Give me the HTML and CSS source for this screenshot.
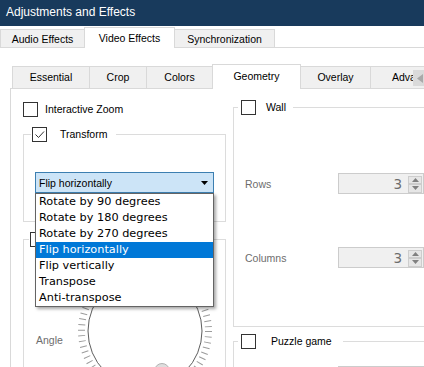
FILE: index.html
```html
<!DOCTYPE html>
<html lang="en">
<head>
    <meta charset="UTF-8">
    <meta name="viewport" content="width=device-width, initial-scale=1.0">
    <title>Adjustments and Effects</title>
    <link rel="stylesheet" href="styles.css">
</head>
<body>
    <div class="titlebar">Adjustments and Effects</div>

    <div class="main-tabs">
        <div class="main-tab tab-audio">Audio Effects</div>
        <div class="main-tab tab-video active">Video Effects</div>
        <div class="main-tab tab-sync">Synchronization</div>
    </div>

    <div class="page">
        <div class="sub-tabs">
            <div class="sub-tab tab-essential">Essential</div>
            <div class="sub-tab tab-crop">Crop</div>
            <div class="sub-tab tab-colors">Colors</div>
            <div class="sub-tab tab-geometry active">Geometry</div>
            <div class="sub-tab tab-overlay">Overlay</div>
            <div class="sub-tab tab-advanced">Adva</div>
            <div class="tab-scroll">
                <svg width="6" height="9" viewBox="0 0 6 9"><polygon points="6,0 6,9 0,4.5" fill="#a9a9a9"/></svg>
            </div>
        </div>

        <div class="pane">
            <!-- left column -->
            <div class="col col-left">
                <div class="check-row zoom-row">
                    <span class="box"></span>
                    <span class="check-label">Interactive Zoom</span>
                </div>

                <fieldset class="group group-transform">
                    <legend class="legend">
                        <span class="box">
                            <svg width="13" height="13" viewBox="0 0 13 13"><polyline points="2.5,6.5 5.5,9.5 11,3.5" fill="none" stroke="#333" stroke-width="1"/></svg>
                        </span>
                        <span class="check-label">Transform</span>
                    </legend>
                    <div class="group-body">
                        <div class="combo">
                            <span class="combo-text">Flip horizontally</span>
                            <svg class="combo-arrow" width="7" height="4" viewBox="0 0 7 4"><polygon points="0,0 7,0 3.5,4" fill="#000"/></svg>
                            <ul class="combo-list">
                                <li>Rotate by 90 degrees</li>
                                <li>Rotate by 180 degrees</li>
                                <li>Rotate by 270 degrees</li>
                                <li class="selected">Flip horizontally</li>
                                <li>Flip vertically</li>
                                <li>Transpose</li>
                                <li>Anti-transpose</li>
                            </ul>
                        </div>
                    </div>
                </fieldset>

                <fieldset class="group group-rotate">
                    <legend class="legend">
                        <span class="box"></span>
                    </legend>
                    <div class="group-body rotate-body">
                        <span class="dim-label angle-label">Angle</span>
                        <svg class="dial" width="150" height="150" viewBox="0 0 150 150">
                            <circle cx="75" cy="75" r="63.5" fill="none" stroke="#9c9c9c" stroke-width="7" stroke-dasharray="1 4.541"/>
                            <circle cx="75" cy="75" r="57" fill="none" stroke="#5e5e5e" stroke-width="1"/>
                            <circle cx="92" cy="115" r="7.5" fill="#dedede" stroke="#b3b3b3" stroke-width="1"/>
                        </svg>
                    </div>
                </fieldset>
            </div>

            <!-- right column -->
            <div class="col col-right">
                <fieldset class="group group-wall">
                    <legend class="legend">
                        <span class="box"></span>
                        <span class="check-label">Wall</span>
                    </legend>
                    <div class="group-body wall-body">
                        <div class="field-row">
                            <span class="dim-label">Rows</span>
                            <div class="spin">
                                <span class="spin-value">3</span>
                                <div class="spin-buttons">
                                    <span class="spin-btn"><svg width="7" height="4" viewBox="0 0 7 4"><polygon points="0,4 7,4 3.5,0" fill="#808080"/></svg></span>
                                    <span class="spin-btn"><svg width="7" height="4" viewBox="0 0 7 4"><polygon points="0,0 7,0 3.5,4" fill="#808080"/></svg></span>
                                </div>
                            </div>
                        </div>
                        <div class="field-row columns-row">
                            <span class="dim-label">Columns</span>
                            <div class="spin">
                                <span class="spin-value">3</span>
                                <div class="spin-buttons">
                                    <span class="spin-btn"><svg width="7" height="4" viewBox="0 0 7 4"><polygon points="0,4 7,4 3.5,0" fill="#808080"/></svg></span>
                                    <span class="spin-btn"><svg width="7" height="4" viewBox="0 0 7 4"><polygon points="0,0 7,0 3.5,4" fill="#808080"/></svg></span>
                                </div>
                            </div>
                        </div>
                    </div>
                </fieldset>

                <fieldset class="group group-puzzle">
                    <legend class="legend">
                        <span class="box"></span>
                        <span class="check-label">Puzzle game</span>
                    </legend>
                    <div class="group-body puzzle-body">
                        <div class="field-row">
                            <span></span>
                            <div class="spin"></div>
                        </div>
                    </div>
                </fieldset>
            </div>
        </div>
    </div>
</body>
</html>
```

FILE: styles.css
```css
* {
    box-sizing: border-box;
}
body {
    margin: 0;
    width: 424px;
    height: 367px;
    overflow: hidden;
    background-color: #fff;
    font-family: "Liberation Sans", Arial, sans-serif;
    font-size: 10.5px;
    color: #000;
}

/* title bar */
.titlebar {
    height: 26px;
    background-color: #183a5c;
    color: #fff;
    font-size: 12px;
    line-height: 24px;
    padding-left: 6px;
}

/* top tabs */
.main-tabs {
    display: flex;
    align-items: flex-end;
    height: 22px;
    border-bottom: 1px solid #d9d9d9;
}
.main-tab {
    height: 18px;
    margin-right: -1px;
    padding-top: 2px;
    line-height: 15px;
    text-align: center;
    background-color: #f0f0f0;
    border: 1px solid #d9d9d9;
    border-bottom: none;
}
.main-tab.active {
    height: 21px;
    margin-bottom: -1px;
    padding-top: 3px;
    background-color: #fff;
    position: relative;
    z-index: 1;
}
.tab-audio { width: 85px; }
.tab-video { width: 91px; }
.tab-sync { width: 101px; }

/* page with inner tabs */
.page {
    padding: 16px 0 0 10px;
}
.sub-tabs {
    display: flex;
    align-items: flex-end;
    height: 24px;
    padding-left: 2px;
    position: relative;
}
.sub-tab {
    flex: none;
    height: 22px;
    margin-right: -1px;
    line-height: 20px;
    text-align: center;
    background-color: #f0f0f0;
    border: 1px solid #d9d9d9;
    border-bottom: none;
    white-space: nowrap;
    overflow: hidden;
}
.sub-tab.active {
    height: 25px;
    margin-bottom: -1px;
    line-height: 23px;
    background-color: #fff;
    position: relative;
    z-index: 2;
}
.tab-essential { width: 78px; }
.tab-crop { width: 58px; }
.tab-colors { width: 67px; }
.tab-geometry { width: 89px; }
.tab-overlay { width: 71px; }
.tab-advanced { width: 70px; text-align: left; padding-left: 21px; }

.tab-scroll {
    position: absolute;
    left: 403px;
    top: 6px;
    width: 17px;
    height: 16px;
    background-color: #dadada;
    z-index: 3;
    display: flex;
    align-items: center;
    padding-left: 4px;
}

/* pane */
.pane {
    display: flex;
    gap: 7px;
    padding: 11px 0 0 12px;
    border-top: 1px solid #d9d9d9;
    border-left: 1px solid #d9d9d9;
    height: 300px;
}
.col {
    flex: none;
}
.col-left {
    width: 203px;
    margin-top: 2px;
}
.col-right {
    width: 200px;
}

.check-row {
    display: flex;
    align-items: center;
    gap: 7px;
    height: 15px;
}
.box {
    flex: none;
    width: 15px;
    height: 15px;
    border: 1px solid #333;
    background-color: #fff;
    display: flex;
}
.check-label {
    line-height: 15px;
    white-space: nowrap;
}
.dim-label {
    color: #6d6d6d;
}

/* group boxes */
.group {
    margin: 0;
    padding: 0;
    min-width: 0;
    border: 1px solid #dcdcdc;
}
.legend {
    display: flex;
    align-items: center;
    height: 15px;
}
.group-body {
    padding: 0;
}

.group-transform {
    margin-top: 10px;
}
.group-transform .legend {
    margin-left: 7px;
    padding: 0 9px 0 1px;
    gap: 13px;
}
.group-transform .group-body {
    padding: 30px 11px 28px;
}

.combo {
    position: relative;
    display: flex;
    align-items: center;
    height: 21px;
    padding-left: 3px;
    background-color: #cce4f7;
    border: 1px solid #3c7fb1;
}
.combo-arrow {
    margin-left: auto;
    margin-right: 5px;
}
.combo-list {
    position: absolute;
    top: calc(100% + 1px);
    left: -1px;
    width: 179px;
    margin: 0;
    padding: 0;
    list-style: none;
    background-color: #fff;
    border: 1px solid #646464;
    box-shadow: 2px 2px 3px rgba(0, 0, 0, 0.35);
    font-family: "DejaVu Sans", Verdana, sans-serif;
    font-size: 11.3px;
    z-index: 5;
}
.combo-list li {
    height: 16px;
    line-height: 16px;
    padding-left: 3px;
    white-space: nowrap;
}
.combo-list li.selected {
    background-color: #0078d7;
    color: #fff;
}

.group-rotate {
    margin-top: 10px;
}
.group-rotate .legend {
    margin-left: 5px;
    padding: 0 60px 0 1px;
}
.rotate-body {
    display: flex;
    align-items: flex-start;
    padding: 9px 0 0 12px;
    height: 200px;
}
.angle-label {
    width: 34px;
    margin-top: 78px;
    line-height: 13px;
}
.dial {
    flex: none;
}

/* right side */
.group-wall .legend {
    margin-left: 4px;
    padding: 0 7px 0 3px;
    gap: 10px;
}
.wall-body {
    padding: 58px 0 58px 11px;
}
.field-row {
    display: grid;
    grid-template-columns: 93px 86px;
    align-items: center;
    height: 21px;
}
.columns-row {
    margin-top: 53px;
}

.spin {
    display: flex;
    align-items: center;
    justify-content: flex-end;
    height: 21px;
    background-color: #f0f0f0;
    border: 1px solid #cccccc;
}
.spin-value {
    font-family: "DejaVu Sans", Verdana, sans-serif;
    font-size: 13.5px;
    color: #6d6d6d;
    margin-right: 6px;
}
.spin-buttons {
    display: flex;
    flex-direction: column;
    width: 14px;
    height: 17px;
    margin: 1px 1px 0 0;
}
.spin-btn {
    flex: 1;
    display: flex;
    align-items: center;
    justify-content: center;
    background-color: #e6e6e6;
    border: 1px solid #cdcdcd;
}

.group-puzzle {
    margin-top: 7px;
}
.group-puzzle .legend {
    margin-left: 4px;
    padding: 0 11px 0 3px;
    gap: 15px;
}
.puzzle-body {
    padding: 17px 0 0 11px;
}
```
